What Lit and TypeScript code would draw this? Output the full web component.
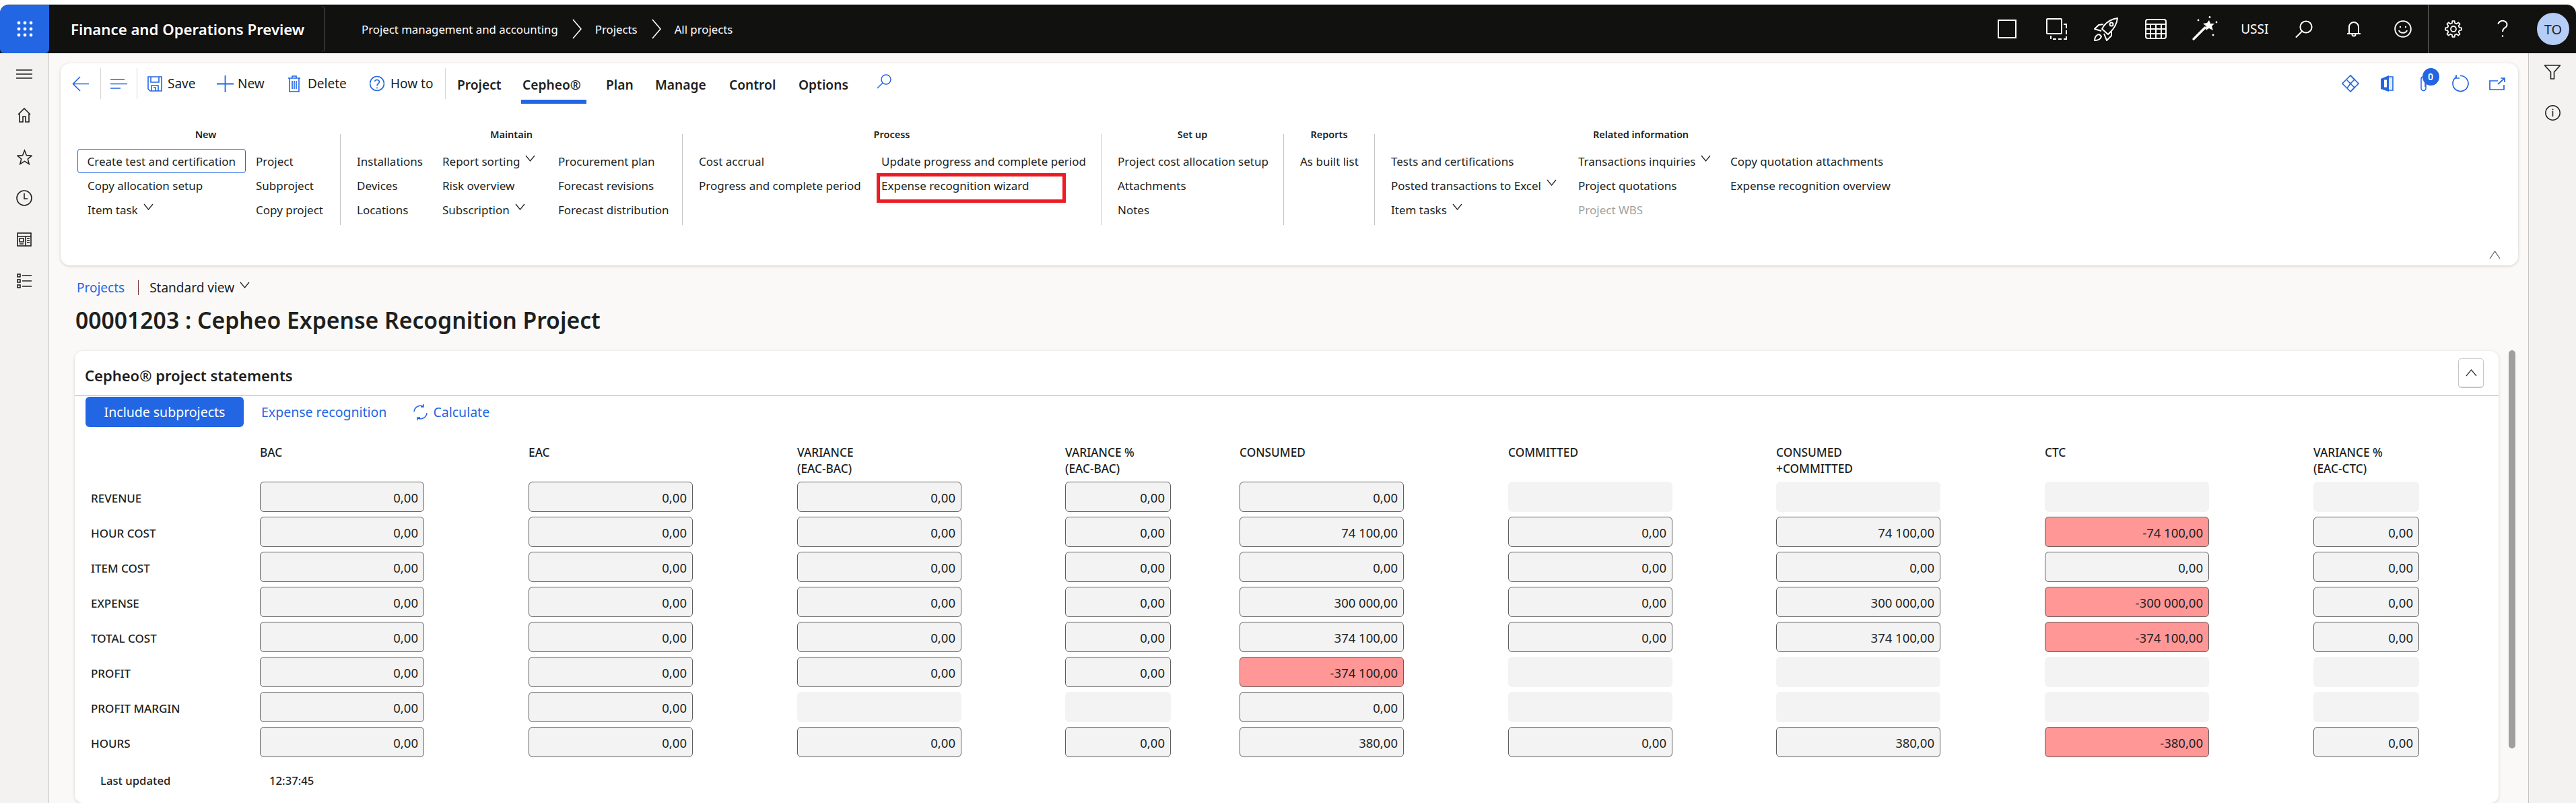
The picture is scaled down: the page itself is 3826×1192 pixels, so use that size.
import { LitElement, html, css, nothing } from "lit";
import { customElement } from "lit/decorators.js";
import { classMap } from "lit/directives/class-map.js";

const BLUE = "#2266e3";

function gearPath(cx: number, cy: number, outer: number, inner: number, teeth: number) {
  const pts: string[] = [];
  for (let i = 0; i < teeth; i++) {
    const a = (i * 2 * Math.PI) / teeth;
    const step = (2 * Math.PI) / teeth;
    const add = (r: number, o: number) =>
      pts.push(`${(cx + r * Math.cos(a + o * step)).toFixed(2)} ${(cy + r * Math.sin(a + o * step)).toFixed(2)}`);
    add(inner, -0.3);
    add(outer, -0.17);
    add(outer, 0.17);
    add(inner, 0.3);
  }
  return "M" + pts.join("L") + "Z";
}

const icons = {
  waffle: html`<svg width="24" height="24" viewBox="0 0 24 24" fill="#fff">
    <circle cx="3" cy="3" r="2.4"/><circle cx="12" cy="3" r="2.4"/><circle cx="21" cy="3" r="2.4"/>
    <circle cx="3" cy="12" r="2.4"/><circle cx="12" cy="12" r="2.4"/><circle cx="21" cy="12" r="2.4"/>
    <circle cx="3" cy="21" r="2.4"/><circle cx="12" cy="21" r="2.4"/><circle cx="21" cy="21" r="2.4"/></svg>`,
  chevronCrumb: html`<svg width="14" height="30" viewBox="0 0 14 30" fill="none" stroke="#fff" stroke-width="1.6"><path d="M1 1 L13 15 L1 29"/></svg>`,
  square: html`<svg width="30" height="30" viewBox="0 0 30 30" fill="none" stroke="#fff" stroke-width="2"><rect x="2" y="2" width="26" height="26"/></svg>`,
  windows: html`<svg width="32" height="32" viewBox="0 0 32 32" fill="none" stroke="#fff" stroke-width="2">
    <rect x="1" y="1" width="22" height="22" rx="1"/><path d="M26 9h4v6M30 18v6M30 27v4h-4M23 31h-5M15 31h-5M7 31v-5" /></svg>`,
  rocket: html`<svg width="36" height="35" viewBox="0 0 36 35" fill="none" stroke="#fff" stroke-width="2" stroke-linejoin="round">
    <path d="M35 1C34 9 31 15 25 21L21 25L12 17L15 12C20 6 27 2 35 1Z"/>
    <path d="M14 10L7 11L1 17L11 20"/><path d="M26 21L26 27L19 34L15 24"/>
    <path d="M8 25C4 25 1 29 1 34C6 34 10 32 11 28Z"/><circle cx="26" cy="10" r="2.5"/></svg>`,
  grid: html`<svg width="32" height="30" viewBox="0 0 32 30" fill="none" stroke="#fff" stroke-width="2">
    <rect x="1" y="1" width="30" height="28" rx="3"/><path d="M1 8h30M2 15h28M2 22h28M8 8v21M16 8v21M24 8v21"/></svg>`,
  wand: html`<svg width="40" height="38" viewBox="0 0 40 38" fill="#fff">
    <path d="M3 34L20 17" stroke="#fff" stroke-width="3.4" stroke-linecap="round"/>
    <path d="M26 6l2 5 6 0-4 4 2 6-6-3-5 3 1-6-5-4 6-1z"/>
    <circle cx="10" cy="6" r="1.4"/><circle cx="27" cy="1.5" r="1.4"/><circle cx="37" cy="9" r="1.4"/><circle cx="32" cy="28" r="1.4"/></svg>`,
  searchWhite: html`<svg width="26" height="26" viewBox="0 0 26 26" fill="none" stroke="#fff" stroke-width="2"><circle cx="16" cy="10" r="8.6"/><path d="M10 16.5L1.5 25" stroke-linecap="round"/></svg>`,
  bell: html`<svg width="22" height="24" viewBox="0 0 22 24" fill="none" stroke="#fff" stroke-width="2"><path d="M4 18V9a7 7 0 0 1 14 0v9M1 19h20"/><path d="M8.5 20a2.5 2.5 0 0 0 5 0"/></svg>`,
  smile: html`<svg width="26" height="26" viewBox="0 0 26 26" fill="none" stroke="#fff" stroke-width="2"><circle cx="13" cy="13" r="11.8"/><path d="M7 15c1.5 5 10.5 5 12 0"/><circle cx="9" cy="10" r="1.2" fill="#fff" stroke="none"/><circle cx="17" cy="10" r="1.2" fill="#fff" stroke="none"/></svg>`,
  gear: html`<svg width="26" height="26" viewBox="0 0 26 26" fill="none" stroke="#fff" stroke-width="1.8" stroke-linejoin="round"><path d=${gearPath(13, 13, 12, 9, 8)}/><circle cx="13" cy="13" r="4"/></svg>`,
  help: html`<svg width="16" height="26" viewBox="0 0 16 26" fill="none" stroke="#fff" stroke-width="2"><path d="M1.5 6a6.5 5.5 0 1 1 10 5c-2.5 1.7-3.5 3-3.5 6"/><circle cx="8" cy="23.5" r="1.3" fill="#fff" stroke="none"/></svg>`,
  menu: html`<svg width="24" height="14" viewBox="0 0 24 14" stroke="#201f1e" stroke-width="1.4"><path d="M0 1h24M0 7h24M0 13h24"/></svg>`,
  home: html`<svg width="20" height="22" viewBox="0 0 20 22" fill="none" stroke="#201f1e" stroke-width="1.6"><path d="M1 10L10 1l9 9M3 8.5V21h5v-8h4v8h5V8.5"/></svg>`,
  star: html`<svg width="23" height="24" viewBox="0 0 24 24" fill="none" stroke="#201f1e" stroke-width="1.6"><path d="M12 2l3 7.5 8 .6-6 5 2 7.9-7-4.300-7 4.300 2-7.900-6-5 8-.6z"/></svg>`,
  clock: html`<svg width="24" height="24" viewBox="0 0 24 24" fill="none" stroke="#201f1e" stroke-width="1.6"><circle cx="12" cy="12" r="11"/><path d="M12 5v8h5"/></svg>`,
  table: html`<svg width="22" height="21" viewBox="0 0 22 21" fill="none" stroke="#201f1e" stroke-width="1.6"><rect x="1" y="1" width="20" height="19"/><path d="M1 6h20M13 6v14M4 9h6v5H4zM4 17h6M15 9h4M15 12h4M15 15h4"/></svg>`,
  list: html`<svg width="22" height="22" viewBox="0 0 22 22" fill="none" stroke="#201f1e" stroke-width="1.6"><rect x="1" y="1" width="4" height="4"/><rect x="1" y="9" width="4" height="4"/><rect x="1" y="17" width="4" height="4"/><path d="M8 3h14M8 11h14M8 19h14"/></svg>`,
  back: html`<svg width="25" height="23" viewBox="0 0 25 23" fill="none" stroke="${BLUE}" stroke-width="1.6"><path d="M12 1L1.5 11.5 12 22M2 11.5h23"/></svg>`,
  lines: html`<svg width="25" height="15" viewBox="0 0 25 15" stroke="${BLUE}" stroke-width="1.6"><path d="M0 1h21M0 7.500h25M0 14h15"/></svg>`,
  save: html`<svg width="22" height="23" viewBox="0 0 22 23" fill="none" stroke="${BLUE}" stroke-width="1.6"><path d="M1 1h20v21H4l-3-3z"/><path d="M5 1v8h12V1M6 22v-8h10v8M9 17h3v5"/></svg>`,
  plus: html`<svg width="25" height="25" viewBox="0 0 25 25" stroke="${BLUE}" stroke-width="1.8"><path d="M12.5 0v25M0 12.5h25"/></svg>`,
  trash: html`<svg width="18" height="25" viewBox="0 0 18 25" fill="none" stroke="${BLUE}" stroke-width="1.6"><path d="M0 4h18M6 4V1h6v3M2 4v20h14V4M6 8v12M9 8v12M12 8v12"/></svg>`,
  howto: html`<svg width="22" height="24" viewBox="0 0 22 24" fill="none" stroke="${BLUE}" stroke-width="1.6"><circle cx="11" cy="12" r="10.5"/><path d="M7.5 9a3.5 3 0 1 1 5.5 3c-1.5 1-2 2-2 3.5"/><circle cx="11" cy="18.5" r="1" fill="${BLUE}" stroke="none"/></svg>`,
  searchBlue: html`<svg width="22" height="22" viewBox="0 0 22 22" fill="none" stroke="${BLUE}" stroke-width="1.5"><circle cx="14" cy="8" r="7"/><path d="M9 13L1 21"/></svg>`,
  diamond: html`<svg width="26" height="26" viewBox="0 0 26 26" fill="none" stroke="${BLUE}" stroke-width="1.6"><path d="M13 1L1 13l7 7 5 5 5-5 7-7z"/><path d="M13 1l6 6-6 6-5-5M13 13l6 6-5 5M8 20l5-7"/></svg>`,
  office: html`<svg width="20" height="24" viewBox="0 0 20 24"><path d="M1 5L13 0v24L1 20z" fill="${BLUE}"/><path d="M8 6.5v11" stroke="#fff" stroke-width="4"/><path d="M13 2h6v20h-6" fill="#dcecfb" stroke="${BLUE}" stroke-width="1.6"/></svg>`,
  clip: html`<svg width="12" height="24" viewBox="0 0 12 24" fill="none" stroke="${BLUE}" stroke-width="1.5"><path d="M9 6v13a3.5 3.5 0 0 1-7 0V5a3 3 0 0 1 6 0v12"/></svg>`,
  refresh: html`<svg width="26" height="26" viewBox="0 0 26 26" fill="none" stroke="${BLUE}" stroke-width="1.7"><path d="M7 3.500A11.500 11.500 0 1 0 13 1.500M7 0v5h5"/></svg>`,
  open: html`<svg width="24" height="19" viewBox="0 0 24 19" fill="none" stroke="${BLUE}" stroke-width="1.7"><path d="M13 5H1v13h21v-7M13 10L23 1M17 1h6v6"/></svg>`,
  calc: html`<svg width="23" height="24" viewBox="0 0 23 24" fill="none" stroke="${BLUE}" stroke-width="1.5"><path d="M2 11A9.500 9.500 0 0 1 16 3.500M21 13A9.500 9.500 0 0 1 7 20.500M16 0v4h-4M7 24v-4h4"/></svg>`,
  filter: html`<svg width="24" height="22" viewBox="0 0 24 22" fill="none" stroke="#201f1e" stroke-width="1.6"><path d="M.5 1h23L14.5 11v10h-5V11z"/></svg>`,
  info: html`<svg width="23" height="23" viewBox="0 0 23 23" fill="none" stroke="#201f1e" stroke-width="1.5"><circle cx="11.5" cy="11.5" r="10.7"/><path d="M11.5 9v8"/><circle cx="11.5" cy="6.5" r="1" fill="#201f1e" stroke="none"/></svg>`,
  chev: html`<svg class="chev" width="15" height="10" viewBox="0 0 15 10" fill="none" stroke="#201f1e" stroke-width="1.2"><path d="M1 1l6.500 8L14 1"/></svg>`,
  caret: html`<svg width="17" height="13" viewBox="0 0 17 13" fill="none" stroke="#605e5c" stroke-width="1.2"><path d="M1 12L8.500 1 16 12"/></svg>`,
  caretDark: html`<svg width="17" height="11" viewBox="0 0 17 11" fill="none" stroke="#323130" stroke-width="1.2"><path d="M1 10L8.500 1 16 10"/></svg>`,
};

type Item = { t: string; chev?: boolean; focus?: boolean; off?: boolean; mark?: boolean };
type Col = { w: number; items: Item[] };
type Group = { title: string; w: number; last?: boolean; cols: Col[] };

const groups: Group[] = [
  { title: "New", w: 400, cols: [
    { w: 250, items: [{ t: "Create test and certification", focus: true }, { t: "Copy allocation setup" }, { t: "Item task", chev: true }] },
    { w: 130, items: [{ t: "Project" }, { t: "Subproject" }, { t: "Copy project" }] },
  ] },
  { title: "Maintain", w: 508, cols: [
    { w: 127, items: [{ t: "Installations" }, { t: "Devices" }, { t: "Locations" }] },
    { w: 172, items: [{ t: "Report sorting", chev: true }, { t: "Risk overview" }, { t: "Subscription", chev: true }] },
    { w: 199, items: [{ t: "Procurement plan" }, { t: "Forecast revisions" }, { t: "Forecast distribution" }] },
  ] },
  { title: "Process", w: 622, cols: [
    { w: 271, items: [{ t: "Cost accrual" }, { t: "Progress and complete period" }] },
    { w: 330, items: [{ t: "Update progress and complete period" }, { t: "Expense recognition wizard", mark: true }] },
  ] },
  { title: "Set up", w: 271, cols: [
    { w: 260, items: [{ t: "Project cost allocation setup" }, { t: "Attachments" }, { t: "Notes" }] },
  ] },
  { title: "Reports", w: 135, cols: [{ w: 120, items: [{ t: "As built list" }] }] },
  { title: "Related information", w: 790, last: true, cols: [
    { w: 278, items: [{ t: "Tests and certifications" }, { t: "Posted transactions to Excel", chev: true }, { t: "Item tasks", chev: true }] },
    { w: 226, items: [{ t: "Transactions inquiries", chev: true }, { t: "Project quotations" }, { t: "Project WBS", off: true }] },
    { w: 270, items: [{ t: "Copy quotation attachments" }, { t: "Expense recognition overview" }] },
  ] },
];

const actions = [
  { t: "Save", w: 103, gap: 8, icon: icons.save },
  { t: "New", w: 106, gap: 6, icon: icons.plus },
  { t: "Delete", w: 121, gap: 11, icon: icons.trash },
  { t: "How to", w: 112, gap: 9, icon: icons.howto },
];

const tabs = [
  { t: "Project", w: 97 },
  { t: "Cepheo®", w: 124, on: true },
  { t: "Plan", w: 73 },
  { t: "Manage", w: 110 },
  { t: "Control", w: 103 },
  { t: "Options", w: 118 },
];

const columns = [
  ["BAC"], ["EAC"], ["VARIANCE", "(EAC-BAC)"], ["VARIANCE %", "(EAC-BAC)"],
  ["CONSUMED"], ["COMMITTED"], ["CONSUMED", "+COMMITTED"], ["CTC"], ["VARIANCE %", "(EAC-CTC)"],
];
const narrow = new Set([3, 8]);

const Z = "0,00";
const rows: { label: string; cells: (string | null)[] }[] = [
  { label: "REVENUE", cells: [Z, Z, Z, Z, Z, null, null, null, null] },
  { label: "HOUR COST", cells: [Z, Z, Z, Z, "74 100,00", Z, "74 100,00", "-74 100,00", Z] },
  { label: "ITEM COST", cells: [Z, Z, Z, Z, Z, Z, Z, Z, Z] },
  { label: "EXPENSE", cells: [Z, Z, Z, Z, "300 000,00", Z, "300 000,00", "-300 000,00", Z] },
  { label: "TOTAL COST", cells: [Z, Z, Z, Z, "374 100,00", Z, "374 100,00", "-374 100,00", Z] },
  { label: "PROFIT", cells: [Z, Z, Z, Z, "-374 100,00", null, null, null, null] },
  { label: "PROFIT MARGIN", cells: [Z, Z, null, null, Z, null, null, null, null] },
  { label: "HOURS", cells: [Z, Z, Z, Z, "380,00", Z, "380,00", "-380,00", Z] },
];

@customElement("app-root")
export class AppRoot extends LitElement {
  static styles = css`
    :host {
      display: block;
      width: 3826px;
      height: 1192px;
      overflow: hidden;
      background: #fff;
      font-family: "Noto Sans", "Open Sans", sans-serif;
      color: #201f1e;
    }
    svg { display: block; flex: none; }

    .topbar {
      margin-top: 7px;
      height: 72px;
      display: flex;
      align-items: center;
      background: #111110;
      color: #fff;
      border-radius: 14px 14px 0 0;
      box-shadow: 0 -1px 0 #d0d0d0;
    }
    .waffle {
      width: 73px;
      height: 72px;
      background: #2266e3;
      border-radius: 12px 0 6px 6px;
      display: flex;
      align-items: center;
      justify-content: center;
    }
    .brand {
      width: 410px;
      height: 68px;
      padding-left: 32px;
      box-sizing: border-box;
      display: flex;
      align-items: center;
      font-size: 22.2px;
      font-weight: 600;
      border-right: 1px solid #5a5a5a;
      border-radius: 0 6px 6px 0;
    }
    .crumbs {
      display: flex;
      align-items: center;
      margin-left: 54px;
      font-size: 16.8px;
    }
    .crumbs svg { margin: 0 20px 0 21px; }
    .tools { margin-left: auto; display: flex; align-items: center; height: 72px; }
    .tool {
      width: 73.5px;
      height: 72px;
      display: flex;
      align-items: center;
      justify-content: center;
      font-size: 19px;
    }
    .tools-sep { width: 1px; height: 72px; background: #6e6e6e; }
    .avatar {
      width: 48px;
      height: 48px;
      border-radius: 50%;
      background: #b6cdf6;
      color: #201f1e;
      font-size: 20px;
      display: flex;
      align-items: center;
      justify-content: center;
      margin: 0 10px 0 14px;
    }

    .body { display: flex; height: 1113px; background: #faf9f8; }
    .rail {
      flex: none;
      background: #f3f2f1;
      display: flex;
      flex-direction: column;
      align-items: center;
    }
    .rail.left { width: 72px; border-right: 1px solid #c8c6c4; }
    .rail.right { width: 71px; border-left: 1px solid #c8c6c4; box-sizing: border-box; }
    .rail-btn { height: 61.5px; display: flex; align-items: center; justify-content: center; flex: none; }
    .rail.right .rail-btn { height: 60px; }
    .rail.right .rail-btn:first-child { margin-top: -2px; }
    .main { flex: 1; padding-left: 17px; position: relative; min-width: 0; }

    .panel {
      position: relative;
      width: 3650px;
      height: 300px;
      margin-top: 15px;
      padding-top: 7px;
      box-sizing: border-box;
      background: #fff;
      border-radius: 14px;
      box-shadow: 0 1px 4px rgba(0, 0, 0, 0.18);
    }
    .actions { display: flex; height: 53px; }
    .back { width: 59px; height: 46px; display: flex; align-items: center; justify-content: center; }
    .lines { width: 53px; height: 46px; display: flex; align-items: center; justify-content: center; }
    .vsep { width: 1px; height: 46px; background: #d8d6d4; flex: none; }
    .action {
      height: 46px;
      display: flex;
      align-items: center;
      font-size: 19px;
      flex: none;
    }
    .cmds { display: flex; padding-left: 15px; }
    .tabs { display: flex; margin-left: 15px; }
    .tab {
      flex: none;
      height: 53px;
      box-sizing: border-box;
      padding: 3px 0 0 2px;
      font-size: 19.2px;
      font-weight: 600;
      line-height: 44px;
      position: relative;
    }
    .tab.on::after {
      content: "";
      position: absolute;
      left: 0;
      bottom: 0;
      width: 97px;
      height: 6px;
      background: #2266e3;
    }
    .find { height: 46px; display: flex; align-items: center; margin-top: -3px; }
    .right-icons { margin-left: auto; display: flex; padding-right: 4px; }
    .ricon {
      width: 54.5px;
      height: 46px;
      display: flex;
      align-items: center;
      justify-content: center;
      position: relative;
    }
    .badge {
      position: absolute;
      left: 25px;
      top: 0;
      width: 25px;
      height: 26px;
      border-radius: 50%;
      background: #2266e3;
      color: #fff;
      font-size: 14px;
      font-weight: 600;
      text-align: center;
      line-height: 26px;
    }

    .ribbon { display: flex; margin: 45px 0 0 16px; }
    .group {
      flex: none;
      height: 135px;
      box-sizing: border-box;
      padding-left: 9px;
      border-right: 1px solid #c8c6c4;
    }
    .group.last { border-right: 0; }
    .group h3 {
      margin: -11px 0 11px -9px;
      height: 22px;
      line-height: 22px;
      font-size: 14.5px;
      font-weight: 600;
      text-align: center;
    }
    .cols { display: flex; }
    .col { flex: none; }
    .item {
      position: relative;
      height: 36px;
      box-sizing: border-box;
      padding-left: 15px;
      display: flex;
      align-items: center;
      font-size: 17px;
      white-space: nowrap;
    }
    .item.focus { border: 1.5px solid #2266e3; border-radius: 4px; padding-left: 13.5px; }
    .item.off { color: #a19f9d; }
    .chev { margin: -8px 0 0 8px; }
    .mark {
      position: absolute;
      left: 8px;
      top: 0;
      width: 281px;
      height: 44px;
      box-sizing: border-box;
      border: 5px solid #ed1c24;
    }
    .collapse { position: absolute; right: 26px; bottom: 9px; }

    .subcrumb {
      display: flex;
      align-items: center;
      height: 36px;
      margin: 15px 0 0 24px;
      font-size: 19px;
    }
    .subcrumb a { color: #2266e3; }
    .subcrumb i { width: 1px; height: 22px; background: #7a3a3a; margin: 0 16px 0 20px; }
    .title {
      margin: 8px 0 0 22px;
      height: 44px;
      line-height: 44px;
      font-size: 33.7px;
      font-weight: 600;
    }
    .card {
      margin: 24px 0 0 21px;
      width: 3600px;
      height: 671px;
      box-sizing: border-box;
      background: #fff;
      border-radius: 12px;
      box-shadow: 0 1px 4px rgba(0, 0, 0, 0.16);
    }
    .card-head {
      height: 67px;
      box-sizing: border-box;
      padding: 5px 22px 0 15px;
      display: flex;
      align-items: center;
      justify-content: space-between;
      border-bottom: 1px solid #bdbbb9;
      font-size: 22px;
      font-weight: 600;
    }
    .expand {
      width: 38px;
      height: 44px;
      margin-top: -5px;
      box-sizing: border-box;
      border: 1px solid #c8c6c4;
      border-bottom-width: 2px;
      border-radius: 5px;
      display: flex;
      align-items: center;
      justify-content: center;
    }
    .toolbar {
      display: flex;
      align-items: center;
      margin: 1px 0 0 16px;
      font-size: 19.5px;
      color: #2266e3;
    }
    .primary {
      width: 235px;
      height: 45px;
      border-radius: 6px;
      background: #2266e3;
      color: #fff;
      display: flex;
      align-items: center;
      justify-content: center;
      margin-right: 26px;
    }
    .calc { display: flex; align-items: center; gap: 7px; margin-left: 39px; }
    .table {
      display: grid;
      grid-template-columns: 251px 399px 399px 398px 259px 399px 398px 399px 399px 157px;
      row-gap: 7px;
      margin: 26px 0 0 24px;
    }
    .head {
      height: 48px;
      line-height: 24px;
      font-size: 17.3px;
      font-weight: 500;
      white-space: nowrap;
    }
    .head div { height: 24px; }
    .label {
      height: 45px;
      display: flex;
      align-items: center;
      padding-top: 3px;
      box-sizing: border-box;
      font-size: 17px;
      font-weight: 500;
    }
    .field {
      height: 45px;
      width: 244px;
      box-sizing: border-box;
      border-radius: 6px;
      background: #f3f3f3;
      display: flex;
      align-items: center;
      justify-content: flex-end;
      padding: 2px 8px 0 0;
      font-size: 18.5px;
      border: 1px solid #605e5c;
    }
    .field.short { width: 157px; }
    .field.empty { border-color: transparent; }
    .field.red { background: #ff9797; }
    .updated {
      display: flex;
      margin: 23px 0 0 38px;
      height: 24px;
      line-height: 24px;
      font-size: 16.7px;
      font-weight: 500;
    }
    .updated span:first-child { width: 251px; }
    .scroll {
      position: absolute;
      left: 3653px;
      top: 441px;
      width: 10px;
      height: 591px;
      border-radius: 5px;
      background: #a19f9d;
    }
  `;

  private renderItem(item: Item) {
    return html`<div class=${classMap({ item: true, focus: !!item.focus, off: !!item.off })}>
      ${item.t}${item.chev ? icons.chev : nothing}
      ${item.mark ? html`<div class="mark"></div>` : nothing}
    </div>`;
  }

  private renderTopbar() {
    return html`<header class="topbar">
      <div class="waffle">${icons.waffle}</div>
      <div class="brand">Finance and Operations Preview</div>
      <nav class="crumbs">
        <span>Project management and accounting</span>${icons.chevronCrumb}
        <span>Projects</span>${icons.chevronCrumb}
        <span>All projects</span>
      </nav>
      <div class="tools">
        <div class="tool">${icons.square}</div>
        <div class="tool">${icons.windows}</div>
        <div class="tool">${icons.rocket}</div>
        <div class="tool">${icons.grid}</div>
        <div class="tool">${icons.wand}</div>
        <div class="tool">USSI</div>
        <div class="tool">${icons.searchWhite}</div>
        <div class="tool">${icons.bell}</div>
        <div class="tool">${icons.smile}</div>
        <div class="tools-sep"></div>
        <div class="tool">${icons.gear}</div>
        <div class="tool">${icons.help}</div>
        <div class="avatar">TO</div>
      </div>
    </header>`;
  }

  private renderPanel() {
    return html`<section class="panel">
      <div class="actions">
        <div class="back">${icons.back}</div>
        <div class="vsep"></div>
        <div class="lines">${icons.lines}</div>
        <div class="vsep"></div>
        <div class="cmds">
          ${actions.map(
            (a) => html`<div class="action" style="width:${a.w}px;gap:${a.gap}px">${a.icon}<span>${a.t}</span></div>`
          )}
        </div>
        <div class="vsep"></div>
        <div class="tabs">
          ${tabs.map(
            (t) => html`<div class=${classMap({ tab: true, on: !!t.on })} style="width:${t.w}px">${t.t}</div>`
          )}
        </div>
        <div class="find">${icons.searchBlue}</div>
        <div class="right-icons">
          <div class="ricon">${icons.diamond}</div>
          <div class="ricon">${icons.office}</div>
          <div class="ricon">${icons.clip}<span class="badge">0</span></div>
          <div class="ricon">${icons.refresh}</div>
          <div class="ricon">${icons.open}</div>
        </div>
      </div>
      <div class="ribbon">
        ${groups.map(
          (g) => html`<div class=${classMap({ group: true, last: !!g.last })} style="width:${g.w}px">
            <h3>${g.title}</h3>
            <div class="cols">
              ${g.cols.map(
                (c) => html`<div class="col" style="width:${c.w}px">${c.items.map((i) => this.renderItem(i))}</div>`
              )}
            </div>
          </div>`
        )}
      </div>
      <div class="collapse">${icons.caret}</div>
    </section>`;
  }

  private renderCard() {
    return html`<section class="card">
      <div class="card-head">
        <span>Cepheo® project statements</span>
        <div class="expand">${icons.caretDark}</div>
      </div>
      <div class="toolbar">
        <div class="primary">Include subprojects</div>
        <span>Expense recognition</span>
        <div class="calc">${icons.calc}<span>Calculate</span></div>
      </div>
      <div class="table">
        <div class="head"></div>
        ${columns.map((c) => html`<div class="head">${c.map((l) => html`<div>${l}</div>`)}</div>`)}
        ${rows.map(
          (r) => html`<div class="label">${r.label}</div>
            ${r.cells.map(
              (v, i) => html`<div
                class=${classMap({
                  field: true,
                  short: narrow.has(i),
                  empty: v === null,
                  red: !!v && v.startsWith("-"),
                })}
              >${v ?? ""}</div>`
            )}`
        )}
      </div>
      <div class="updated"><span>Last updated</span><span>12:37:45</span></div>
    </section>`;
  }

  render() {
    return html`
      ${this.renderTopbar()}
      <div class="body">
        <aside class="rail left">
          <div class="rail-btn">${icons.menu}</div>
          <div class="rail-btn">${icons.home}</div>
          <div class="rail-btn">${icons.star}</div>
          <div class="rail-btn">${icons.clock}</div>
          <div class="rail-btn">${icons.table}</div>
          <div class="rail-btn">${icons.list}</div>
        </aside>
        <main class="main">
          ${this.renderPanel()}
          <div class="subcrumb"><a>Projects</a><i></i><span>Standard view</span>${icons.chev}</div>
          <div class="title">00001203 : Cepheo Expense Recognition Project</div>
          ${this.renderCard()}
          <div class="scroll"></div>
        </main>
        <aside class="rail right">
          <div class="rail-btn">${icons.filter}</div>
          <div class="rail-btn">${icons.info}</div>
        </aside>
      </div>
    `;
  }
}
